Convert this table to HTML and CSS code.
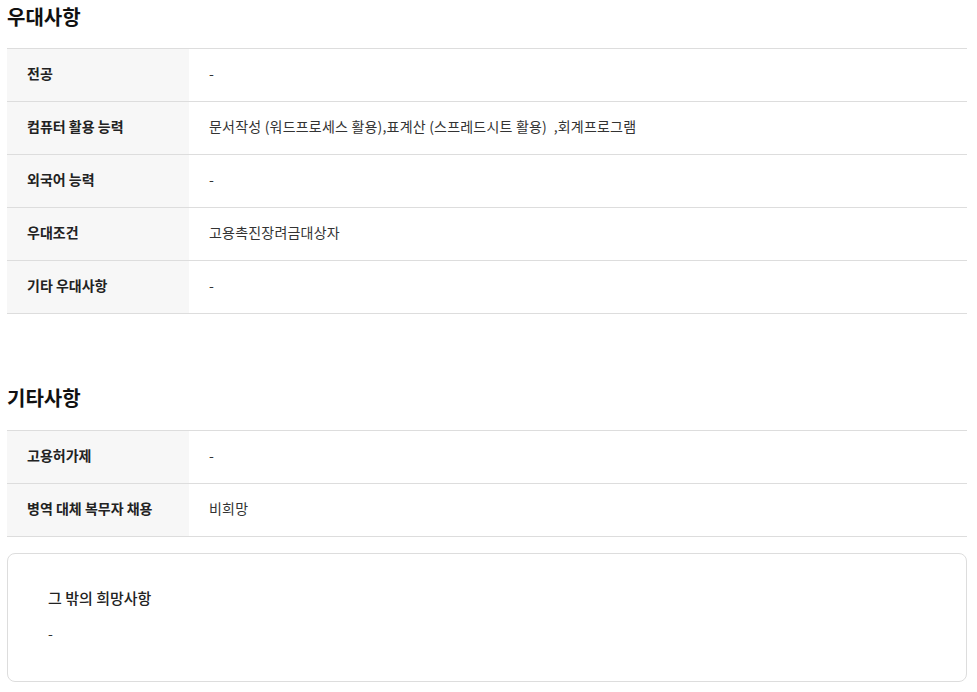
FILE: index.html
```html
<!DOCTYPE html>
<html>
  <head>
    <title>우대사항</title>
    <link rel="stylesheet" href="styles.css">
  </head>
  <body>
    <div class="wrap">
      <h2 class="sec-title">우대사항</h2>
      <table class="info-table">
        <tr><th>전공</th><td>-</td></tr>
        <tr><th>컴퓨터 활용 능력</th><td>문서작성 (워드프로세스 활용),표계산 (스프레드시트 활용) &nbsp;,회계프로그램</td></tr>
        <tr><th>외국어 능력</th><td>-</td></tr>
        <tr><th>우대조건</th><td>고용촉진장려금대상자</td></tr>
        <tr><th>기타 우대사항</th><td>-</td></tr>
      </table>

      <h2 class="sec-title second">기타사항</h2>
      <table class="info-table">
        <tr><th>고용허가제</th><td>-</td></tr>
        <tr><th>병역 대체 복무자 채용</th><td>비희망</td></tr>
      </table>

      <div class="etc-box">
        <p class="etc-title">그 밖의 희망사항</p>
        <p class="etc-text">-</p>
      </div>
    </div>
  </body>
</html>
```

FILE: styles.css
```css
body {
  margin: 0;
  font-family: "Noto Sans CJK KR", "Noto Sans", sans-serif;
  color: #222;
  background: #fff;
}

.wrap {
  width: 960px;
  margin-left: 7px;
}

.sec-title {
  margin: 0 0 14px;
  font-size: 20px;
  line-height: 34px;
  font-weight: 700;
  color: #111;
}

.sec-title.second {
  margin-top: 67px;
  margin-bottom: 15px;
}

.info-table {
  width: 100%;
  border-collapse: collapse;
  border-top: 1px solid #ddd;
}

.info-table tr {
  border-bottom: 1px solid #ddd;
}

.info-table th,
.info-table td {
  height: 53px;
  box-sizing: border-box;
  padding: 0 0 4px 20px;
  font-size: 14px;
}

.info-table th {
  width: 182px;
  background: #f7f7f7;
  text-align: left;
  font-weight: 700;
  color: #222;
}

.info-table td {
  color: #333;
  letter-spacing: 0.2px;
}

.etc-box {
  margin-top: 16px;
  border: 1px solid #ddd;
  border-radius: 8px;
  padding: 33px 40px 37px;
}

.etc-box p {
  margin: 0;
  line-height: 22px;
}

.etc-title {
  font-size: 15px;
  font-weight: 500;
  color: #222;
}

.etc-text {
  margin-top: 13px !important;
  font-size: 14px;
  color: #333;
}
```
